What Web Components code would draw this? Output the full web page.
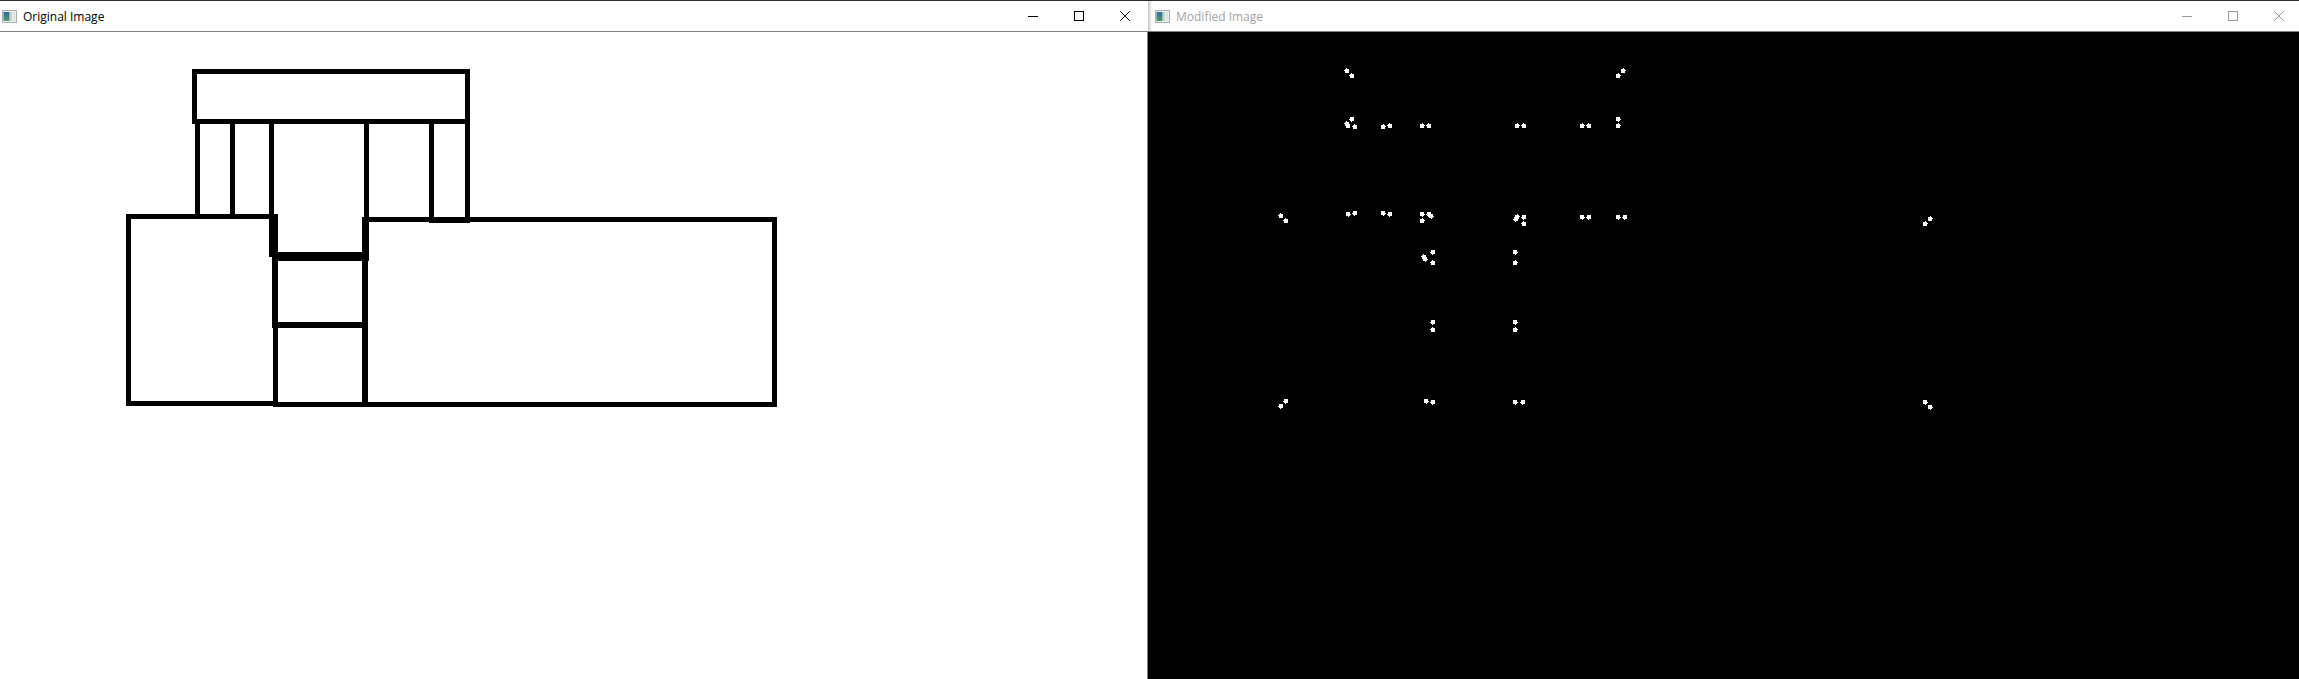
<!DOCTYPE html>
<html>
<head>
<meta charset="utf-8">
<title>Original Image / Modified Image</title>
<style>
  html, body { margin: 0; height: 100%; background: #fff; overflow: hidden; }
</style>
</head>
<body>
<cv-desktop>
  <cv-window heading="Original Image" active style="--win-width: 1148px">
    <line-drawing></line-drawing>
  </cv-window>
  <cv-window heading="Modified Image" style="--win-width: 1154px; --canvas-bg: #000">
    <corner-map></corner-map>
  </cv-window>
</cv-desktop>

<script>
class CvDesktop extends HTMLElement {
  constructor() {
    super();
    this.attachShadow({ mode: "open" }).innerHTML = `
    <style>
    :host {
      display: flex;
      width: 2299px;
      height: 679px;
      overflow: hidden;
    }
    </style>
    <slot></slot>`;
  }
}

class CvWindow extends HTMLElement {
  constructor() {
    super();
    const heading = this.getAttribute("heading") || "";
    const active = this.hasAttribute("active");
    this.attachShadow({ mode: "open" }).innerHTML = `
    <style>
    :host {
      display: flex;
      flex-direction: column;
      flex: 0 0 var(--win-width);
      box-sizing: border-box;
      height: 679px;
      border-top: solid 1px #2b2b2b;
      --glyph: ${active ? "#000" : "#9a9a9a"};
    }
    header {
      display: flex;
      align-items: center;
      flex: 0 0 30px;
      border-bottom: solid 1px #808080;
      background: ${active ? "#fff" : "linear-gradient(90deg, #c4c4c4, #fff 4px)"};
      font: 12px "Open Sans", sans-serif;
      color: ${active ? "#000" : "#a3a3a3"};
    }
    .app-icon {
      margin-inline: ${active ? "2px 6px" : "7px 6px"};
      flex: none;
    }
    h1 {
      flex: 1;
      margin: 0;
      font: inherit;
      white-space: nowrap;
    }
    button {
      display: flex;
      align-items: center;
      justify-content: center;
      width: 46px;
      height: 30px;
      padding: 0;
      border: 0;
      background: none;
    }
    button svg {
      fill: none;
      stroke: var(--glyph);
      stroke-width: 1;
    }
    main {
      flex: 1;
      background: var(--canvas-bg, #fff);
      border-right: ${active ? "solid 1px #808080" : "0"};
    }
    </style>
    <header>
      <svg class="app-icon" width="15" height="13" viewBox="0 0 15 13">
        <defs>
          <linearGradient id="tile" x1="0" y1="0" x2="0" y2="1">
            <stop offset="0" stop-color="#2a6f9c"/>
            <stop offset="1" stop-color="#4f9a6c"/>
          </linearGradient>
        </defs>
        <rect width="15" height="13" fill="#a9adb0"/>
        <rect x="1" y="1" width="13" height="11" fill="#eef0ef"/>
        <rect x="1.5" y="2" width="6" height="9" fill="url(#tile)"/>
        <rect x="8" y="2" width="2" height="9" fill="#c9d3cc"/>
        <rect x="11" y="2" width="2" height="9" fill="#dfe3e0"/>
      </svg>
      <h1>${heading}</h1>
      <button aria-label="Minimize"><svg width="10" height="10"><path d="M0 5.5H10"/></svg></button>
      <button aria-label="Maximize"><svg width="10" height="10"><rect x=".5" y=".5" width="9" height="9"/></svg></button>
      <button aria-label="Close"><svg width="10" height="10"><path d="M.3 .3L9.7 9.7M9.7 .3L.3 9.7"/></svg></button>
    </header>
    <main><slot></slot></main>`;
  }
}

// black outline image, each bar is [x, y, w, h] in page pixels
const BARS = [
  [192, 69, 278, 5], [192, 69, 5, 55], [465, 69, 5, 55], [192, 119, 278, 5],
  [195, 124, 5, 90], [230, 124, 5, 90], [269, 124, 5, 133], [364, 124, 5, 93],
  [429, 124, 5, 99], [465, 124, 5, 99], [429, 222, 41, 1],
  [269, 214, 9, 43], [362, 217, 7, 40],
  [126, 214, 152, 5], [126, 214, 5, 192], [126, 401, 152, 5], [273, 219, 5, 188],
  [273, 252, 96, 9], [272, 252, 6, 76], [362, 252, 6, 155], [273, 322, 90, 6],
  [273, 402, 504, 5], [362, 217, 415, 5], [772, 217, 5, 190],
];

class LineDrawing extends HTMLElement {
  constructor() {
    super();
    const bars = BARS.map(([x, y, w, h]) => `<rect x="${x}" y="${y}" width="${w}" height="${h}"/>`).join("");
    this.attachShadow({ mode: "open" }).innerHTML = `
    <style>
    :host { display: block; }
    svg { display: block; }
    </style>
    <svg width="1147" height="647" viewBox="0 32 1147 647" shape-rendering="crispEdges">${bars}</svg>`;
  }
}

// corner dots, [x, y, nub] in page pixels
const DOTS = [
  [1347, 71, "lt"], [1352, 76, "lt"], [1623, 71, "rt"], [1618, 76, "rt"],
  [1352, 119, "lb"], [1347, 124, "lt"], [1348, 126, "lt"], [1355, 127, "lt"],
  [1383, 127, "rt"], [1390, 126, "lt"], [1422, 126, "rt"], [1429, 126, "lt"],
  [1517, 126, "rt"], [1524, 126, "lt"], [1582, 126, "rt"], [1589, 126, "lt"], [1618, 119, "rb"], [1618, 126, "rt"],
  [1281, 216, "lt"], [1286, 221, "lt"], [1348, 214, "rb"], [1355, 213, "lb"],
  [1383, 213, "rb"], [1390, 214, "lb"], [1422, 214, "rb"], [1429, 214, "lb"], [1431, 216, "rb"], [1422, 221, "rt"],
  [1517, 217, "rt"], [1516, 219, "lb"], [1524, 217, "lb"], [1524, 224, "lt"],
  [1582, 217, "rb"], [1589, 217, "lb"], [1618, 217, "rb"], [1625, 217, "lb"],
  [1433, 252, "lb"], [1424, 257, "lt"], [1425, 259, "rb"], [1433, 263, "lt"], [1515, 252, "rb"], [1515, 263, "rt"],
  [1433, 322, "lb"], [1433, 330, "lt"], [1515, 322, "rb"], [1515, 330, "rt"],
  [1286, 401, "lb"], [1281, 406, "lb"], [1426, 401, "rb"], [1433, 402, "lb"], [1515, 402, "rb"], [1523, 402, "lb"],
  [1930, 219, "rt"], [1925, 224, "rt"], [1925, 402, "rb"], [1930, 407, "rb"],
];

const NUBS = {
  lt: "M-3 -1h1v1h-1zM-1 -3h1v1h-1z",
  rt: "M2 -1h1v1h-1zM0 -3h1v1h-1z",
  lb: "M-3 0h1v1h-1zM-1 2h1v1h-1z",
  rb: "M2 0h1v1h-1zM0 2h1v1h-1z",
};

class CornerMap extends HTMLElement {
  constructor() {
    super();
    const dots = DOTS.map(([x, y, nub]) =>
      `<path transform="translate(${x} ${y})" d="M-2 -2h4v4h-4z${NUBS[nub]}"/>`).join("");
    this.attachShadow({ mode: "open" }).innerHTML = `
    <style>
    :host { display: block; }
    svg { display: block; fill: #fff; }
    </style>
    <svg width="1154" height="647" viewBox="1148 32 1154 647" shape-rendering="crispEdges">${dots}</svg>`;
  }
}

customElements.define("cv-desktop", CvDesktop);
customElements.define("cv-window", CvWindow);
customElements.define("line-drawing", LineDrawing);
customElements.define("corner-map", CornerMap);
</script>
</body>
</html>
